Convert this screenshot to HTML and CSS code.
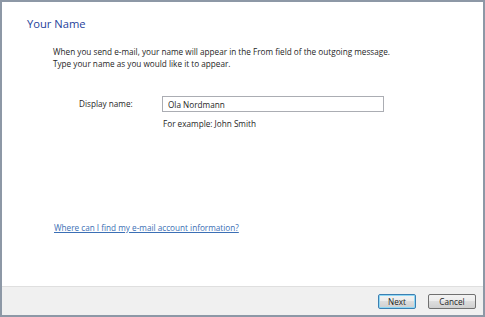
FILE: index.html
```html
<!DOCTYPE html>
<html>
  <head>
    <title>Your Name</title>
    <link rel="stylesheet" href="styles.css">
  </head>
  <body>
    <div class="window">
      <div class="content">
        <h1 class="title">Your Name</h1>
        <p class="intro">When you send e-mail, your name will appear in the From field of the outgoing message.<br>Type your name as you would like it to appear.</p>

        <div class="field-row">
          <label class="field-label" for="displayName">Display name:</label>
          <div class="field-body">
            <input type="text" id="displayName" class="text-input" value="Ola Nordmann">
            <div class="hint">For example: John Smith</div>
          </div>
        </div>

        <a class="help-link" href="#">Where can I find my e-mail account information?</a>
      </div>

      <div class="footer">
        <button class="button default-button">Next</button>
        <button class="button">Cancel</button>
      </div>
    </div>
  </body>
</html>
```

FILE: styles.css
```css
html,
body {
  margin: 0;
  height: 100%;
}

body {
  background-color: #8d98a6;
  font-family: "Open Sans", "Noto Sans", sans-serif;
  font-size: 8.2px;
  color: #262626;
  padding: 2px;
  box-sizing: border-box;
}

.window {
  display: flex;
  flex-direction: column;
  height: 100%;
  background-color: #ffffff;
}

.content {
  flex: 1;
  display: flex;
  flex-direction: column;
  padding: 14px 0 0 25px;
}

.title {
  margin: 0;
  font-size: 11.2px;
  font-weight: normal;
  color: #1f3f9b;
  line-height: 15px;
}

.intro {
  margin: 15px 0 0 26px;
  line-height: 12px;
}

.field-row {
  display: flex;
  align-items: flex-start;
  margin: 26px 0 0 52px;
}

.field-label {
  width: 83px;
  line-height: 16px;
}

.text-input {
  box-sizing: border-box;
  width: 222px;
  height: 16px;
  padding: 0 5px;
  border: 1px solid #abadb3;
  font-family: inherit;
  font-size: 8.2px;
  color: #1e1e1e;
  outline: none;
}

.hint {
  margin-top: 6px;
  margin-left: 1px;
}

.help-link {
  margin: 93px 0 0 27px;
  color: #3b6fb5;
  text-decoration: underline;
  align-self: flex-start;
}

.footer {
  display: flex;
  justify-content: flex-end;
  gap: 12px;
  height: 28px;
  align-items: center;
  padding-right: 7px;
  background-color: #f0f0f0;
  border-top: 1px solid #dfdfdf;
}

.button {
  box-sizing: border-box;
  height: 15px;
  width: 48px;
  padding: 0;
  border: 1px solid #707070;
  border-radius: 2px;
  background: linear-gradient(#f2f2f2, #ebebeb 50%, #dddddd 50%, #cfcfcf);
  font-family: inherit;
  font-size: 8.2px;
  color: #1e1e1e;
}

.default-button {
  width: 38px;
  border-color: #3c7fb1;
  box-shadow: inset 0 0 0 1px #8fd8f5;
}
```
